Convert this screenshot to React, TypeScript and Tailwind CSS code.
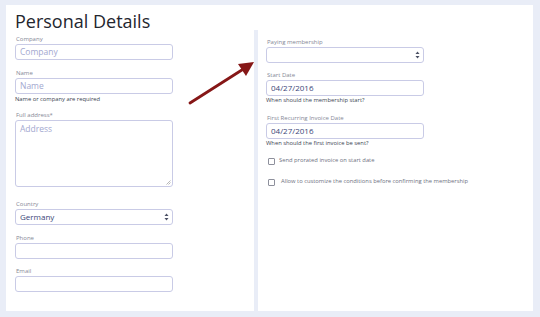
import React from 'react';

// Small up/down chevrons used by the native-looking selects
const SelectArrows = () => (
  <svg width="5" height="8" viewBox="0 0 5 8" className="absolute right-[3px] top-1/2 -translate-y-1/2">
    <path d="M2.5 0.5 L4.5 3 L0.5 3 Z" fill="#4a4f63" />
    <path d="M2.5 7.5 L4.5 5 L0.5 5 Z" fill="#4a4f63" />
  </svg>
);

const Label = ({ children }: { children: React.ReactNode }) => (
  <div className="text-[6px] leading-[10px] text-[#858896] pl-[1px]">{children}</div>
);

const Helper = ({ children }: { children: React.ReactNode }) => (
  <div className="text-[5.8px] leading-[8px] text-[#3a3f52]">{children}</div>
);

const Input = ({ placeholder, value }: { placeholder?: string; value?: string }) => (
  <div className="h-[16px] w-[158px] rounded-[3px] border border-[#c9cbe6] bg-white flex items-center px-[4px]">
    {value ? (
      <span className="text-[8px] text-[#3b4577]">{value}</span>
    ) : (
      <span className="text-[8.5px] text-[#a3a8cf]">{placeholder}</span>
    )}
  </div>
);

const Select = ({ value }: { value?: string }) => (
  <div className="relative h-[16px] w-[158px] rounded-[3px] border border-[#c9cbe6] bg-white flex items-center px-[4px] text-[8px] font-medium text-[#3b4577]">
    {value}
    <SelectArrows />
  </div>
);

const Checkbox = ({ label, gap }: { label: string; gap: string }) => (
  <div className="flex items-center">
    <div className="w-[7px] h-[7px] rounded-[1px] border border-[#8e909c] bg-white mt-[3px]" />
    <span className={`text-[5.8px] leading-[8px] text-[#6d7080] ${gap}`}>{label}</span>
  </div>
);

export default function App() {
  return (
    <div
      className="w-[540px] h-[317px] bg-[#e9edf7] pt-[5px] pl-[6px]"
      style={{ fontFamily: '"Open Sans", "Liberation Sans", sans-serif' }}
    >
      <div className="relative w-[527px] h-[306px] bg-white flex">
        {/* Left column */}
        <div className="w-[248px] pl-[9px]">
          <h1 className="mt-[6px] text-[18px] leading-[20px] text-[#24262e]">Personal Details</h1>

          <div className="mt-[3px]">
            <Label>Company</Label>
            <Input placeholder="Company" />
          </div>

          <div className="mt-[8px]">
            <Label>Name</Label>
            <Input placeholder="Name" />
            <div className="mt-[1px]">
              <Helper>Name or company are required</Helper>
            </div>
          </div>

          <div className="mt-[7px]">
            <Label>Full address*</Label>
            <div className="relative h-[67px] w-[158px] rounded-[3px] border border-[#c9cbe6] px-[4px] pt-[2px] text-[8.5px] text-[#a3a8cf]">
              Address
              <svg width="5" height="5" viewBox="0 0 5 5" className="absolute right-[1px] bottom-[1px]">
                <path d="M0.5 4.5 L4.5 0.5 M2.5 4.5 L4.5 2.5" stroke="#9a9a9a" strokeWidth="0.7" />
              </svg>
            </div>
          </div>

          <div className="mt-[12px]">
            <Label>Country</Label>
            <Select value="Germany" />
          </div>

          <div className="mt-[8px]">
            <Label>Phone</Label>
            <Input />
          </div>

          <div className="mt-[7px]">
            <Label>Email</Label>
            <Input />
          </div>
        </div>

        {/* Right column */}
        <div className="mt-[25px] flex-1 border-l-[4px] border-[#e9edf7] pl-[8px] pt-[7px]">
          <Label>Paying membership</Label>
          <Select />

          <div className="mt-[7px]">
            <Label>Start Date</Label>
            <Input value="04/27/2016" />
            <Helper>When should the membership start?</Helper>
          </div>

          <div className="mt-[9px]">
            <Label>First Recurring Invoice Date</Label>
            <Input value="04/27/2016" />
            <Helper>When should the first invoice be sent?</Helper>
          </div>

          <div className="mt-[8px] pl-[2px] flex flex-col gap-[11px]">
            <Checkbox label="Send prorated invoice on start date" gap="ml-[4px]" />
            <Checkbox label="Allow to customize the conditions before confirming the membership" gap="ml-[6px]" />
          </div>
        </div>

        {/* Annotation arrow */}
        <svg
          width="527"
          height="306"
          viewBox="0 0 527 306"
          className="absolute left-0 top-0 pointer-events-none"
        >
          <line x1="184" y1="98" x2="239" y2="63" stroke="#861717" strokeWidth="2.8" strokeLinecap="round" />
          <path d="M248 57 L232 59 L240 71 Z" fill="#861717" />
        </svg>
      </div>
    </div>
  );
}
